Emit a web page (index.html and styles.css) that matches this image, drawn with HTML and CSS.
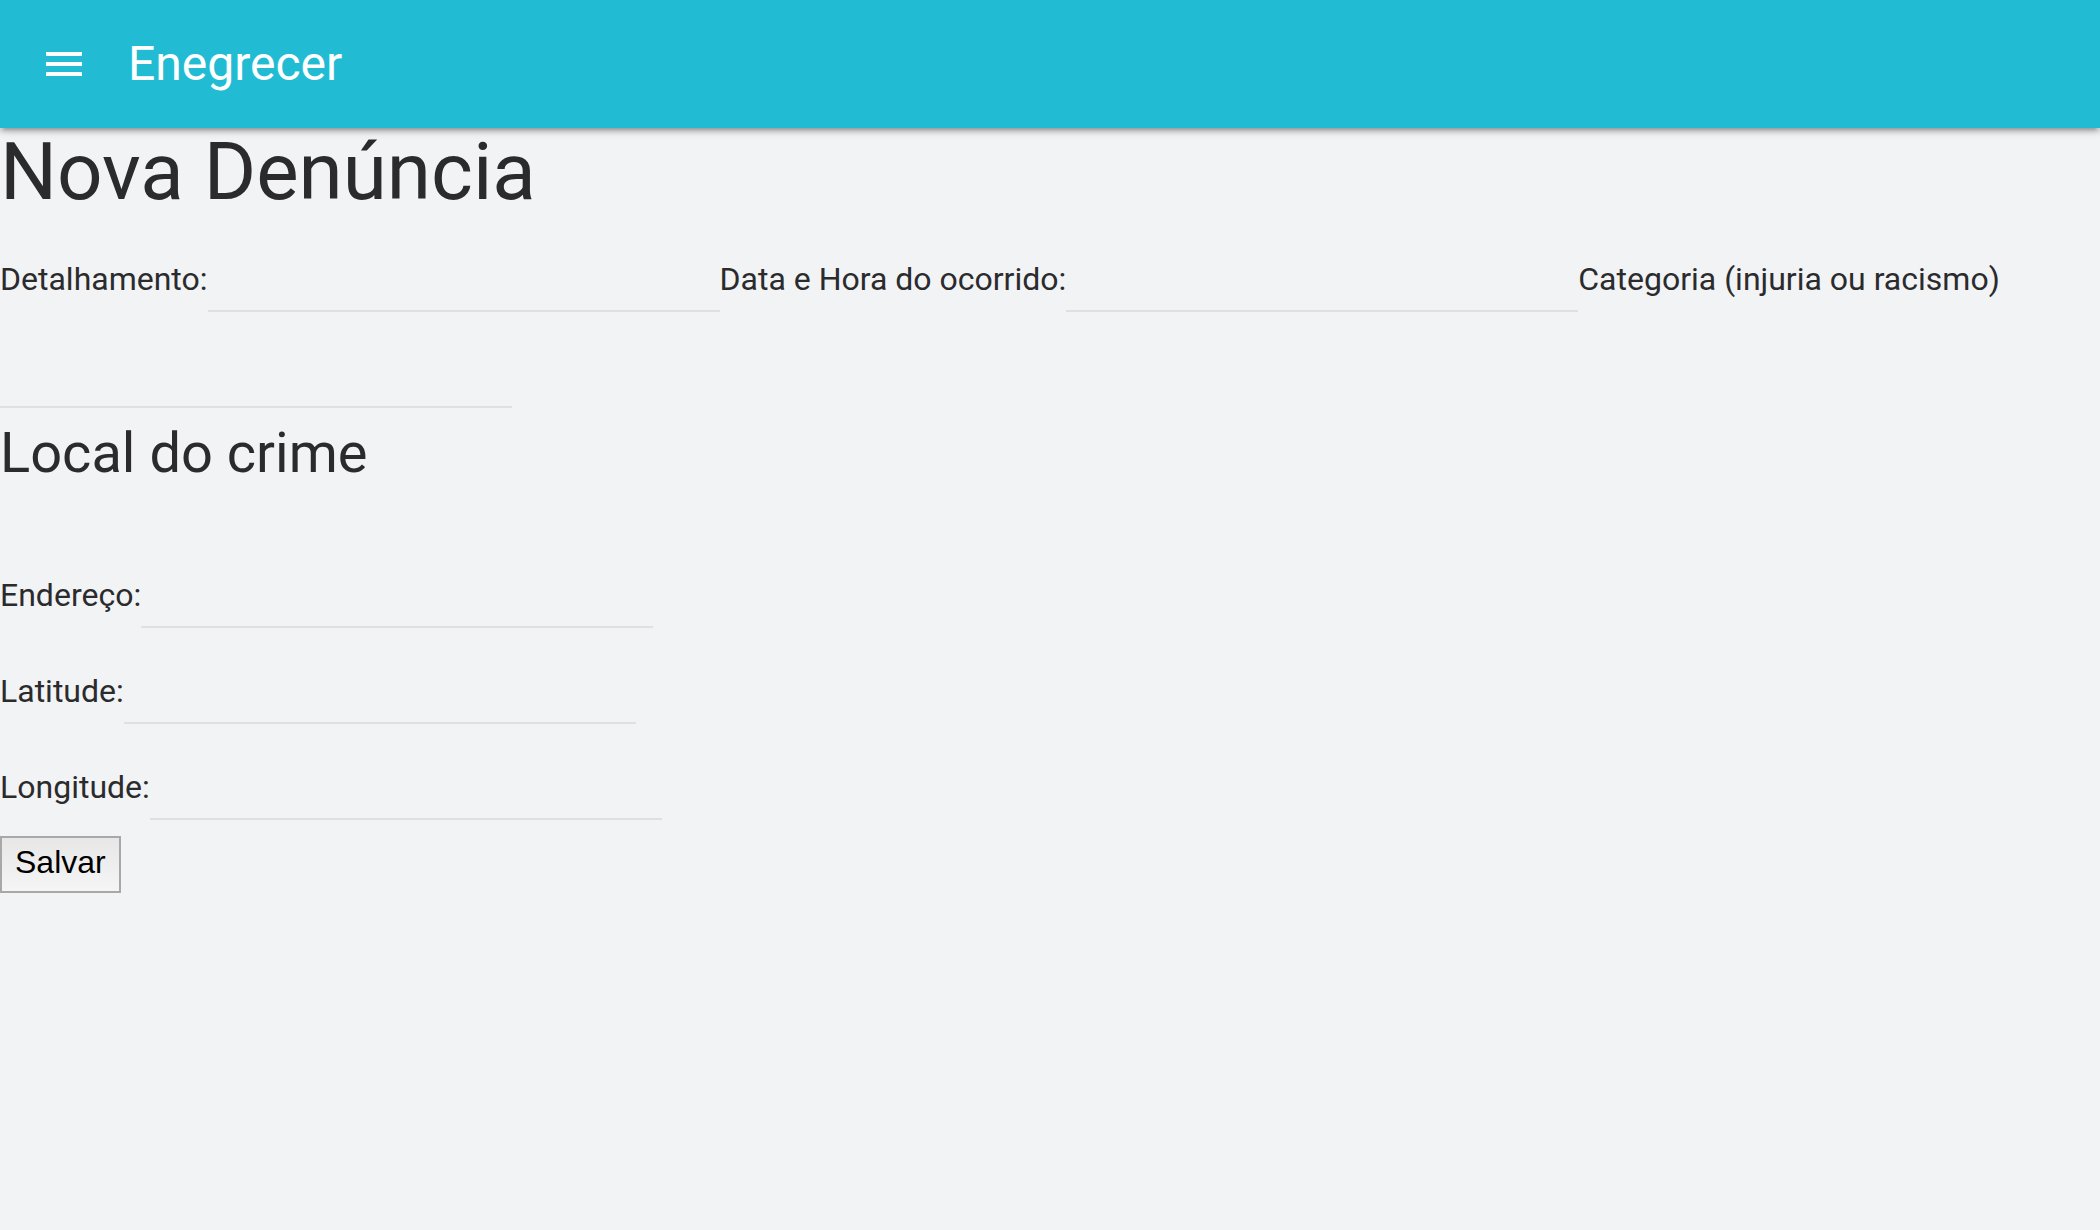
FILE: index.html
```html
<!DOCTYPE html>
<html lang="pt-BR">
<head>
<meta charset="utf-8">
<title>Enegrecer</title>
<link rel="stylesheet" href="styles.css">
</head>
<body>
<header class="topbar">
  <button class="menu-btn" type="button" aria-label="Menu">
    <svg width="48" height="48" viewBox="0 0 48 48" aria-hidden="true">
      <rect x="6" y="12" width="36" height="4" fill="#fff"/>
      <rect x="6" y="22" width="36" height="4" fill="#fff"/>
      <rect x="6" y="32" width="36" height="4" fill="#fff"/>
    </svg>
  </button>
  <span class="brand">Enegrecer</span>
</header>
<main class="page">
  <h1 class="title">Nova Denúncia</h1>
  <form class="form">
    <div class="fields">
      <label class="label" for="det">Detalhamento:</label>
      <input class="field" id="det" type="text">
      <label class="label" for="data">Data e Hora do ocorrido:</label>
      <input class="field" id="data" type="text">
      <label class="label" for="cat">Categoria (injuria ou racismo)</label>
      <input class="field" id="cat" type="text">
    </div>
    <h2 class="subtitle">Local do crime</h2>
    <div class="fields">
      <label class="label" for="end">Endereço:</label>
      <input class="field" id="end" type="text">
    </div>
    <div class="fields">
      <label class="label" for="lat">Latitude:</label>
      <input class="field" id="lat" type="text">
    </div>
    <div class="fields">
      <label class="label" for="lon">Longitude:</label>
      <input class="field" id="lon" type="text">
    </div>
    <button class="save" type="button">Salvar</button>
  </form>
</main>
</body>
</html>
```

FILE: styles.css
```css
html, body {
  margin: 0;
  padding: 0;
}

body {
  background: #f2f3f5;
  color: #2b2b2d;
  font-family: Roboto, "Liberation Sans", Arial, sans-serif;
  width: 2100px;
  min-height: 1230px;
}

.topbar {
  display: flex;
  align-items: center;
  height: 128px;
  padding-left: 40px;
  background: #21bcd3;
  box-shadow: 0 4px 4px 0 rgba(0, 0, 0, 0.14), 0 6px 2px -4px rgba(0, 0, 0, 0.12), 0 2px 10px 0 rgba(0, 0, 0, 0.2);
  position: relative;
  z-index: 1;
}

.menu-btn {
  display: block;
  width: 48px;
  height: 48px;
  padding: 0;
  margin: 0;
  border: none;
  background: transparent;
}

.menu-btn svg {
  display: block;
}

.brand {
  margin-left: 40px;
  color: #ffffff;
  font-family: Roboto, sans-serif;
  font-size: 48px;
  font-weight: 400;
  line-height: 128px;
}

.page {
  margin: 0;
}

.title {
  margin: 0;
  font-size: 80px;
  font-weight: 400;
  line-height: 88px;
  color: #2b2b2d;
}

.form {
  margin: 0;
}

.fields {
  display: flex;
  flex-wrap: wrap;
  align-items: flex-end;
}

.label {
  font-size: 32px;
  line-height: 37px;
  margin-bottom: 14px;
  white-space: nowrap;
  color: #2b2b2d;
}

.field {
  box-sizing: border-box;
  width: 512px;
  height: 96px;
  margin: 0;
  padding: 0;
  border: none;
  border-bottom: 2px solid #dfe0e3;
  border-radius: 0;
  background: transparent;
  font-family: Roboto, sans-serif;
  font-size: 32px;
  color: #2b2b2d;
  outline: none;
}

.subtitle {
  margin: 14px 0 48px;
  font-size: 56px;
  font-weight: 400;
  line-height: 62px;
  color: #2b2b2d;
}

.save {
  display: block;
  margin: 16px 0 0;
  padding: 6px 13px 10px;
  border: 2px solid #a8a8a8;
  border-radius: 0;
  background: linear-gradient(#e7e7e7, #f5f5f5);
  color: #000000;
  font-family: "Liberation Sans", Arial, sans-serif;
  font-size: 32px;
  line-height: 37px;
}
```
